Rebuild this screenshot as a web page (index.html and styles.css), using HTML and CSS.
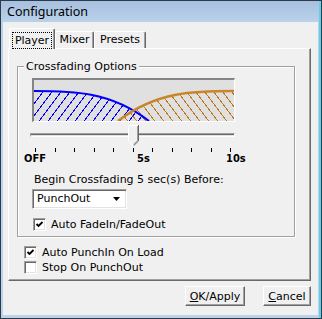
FILE: index.html
```html
<!DOCTYPE html>
<html lang="en">
<head>
  <meta charset="UTF-8" />
  <title>Configuration</title>
  <link rel="stylesheet" href="styles.css">
</head>
<body>
  <div class="window">
    <div class="titlebar">Configuration</div>
    <div class="client">
      <div class="tabs">
        <div class="tab selected"><span class="focus">Player</span></div>
        <div class="tab">Mixer</div>
        <div class="tab">Presets</div>
      </div>

      <div class="panel">
        <div class="group">
          <div class="group-title">Crossfading Options</div>

          <!-- fade curves -->
          <div class="graph">
            <svg width="200" height="41" viewBox="0 0 200 41">
              <defs>
                <pattern id="hatch-blue" width="9" height="12" patternUnits="userSpaceOnUse">
                  <line x1="0" y1="12" x2="9" y2="0" stroke="#0000ff" stroke-width="1" shape-rendering="crispEdges" />
                </pattern>
                <pattern id="hatch-orange" width="9" height="12" patternUnits="userSpaceOnUse">
                  <line x1="0" y1="0" x2="9" y2="12" stroke="#c07a1e" stroke-width="1" shape-rendering="crispEdges" />
                </pattern>
              </defs>
              <path d="M-1 11 C 37.7 11 76.3 11 115 41 L -1 41 Z" fill="url(#hatch-blue)" />
              <path d="M200 11 C 161.3 11 122.7 11 84 41 L 200 41 Z" fill="url(#hatch-orange)" />
              <path d="M-1 11 C 37.7 11 76.3 11 115 41" fill="none" stroke="#0000ff" stroke-width="2.2" />
              <path d="M200 11 C 161.3 11 122.7 11 84 41" fill="none" stroke="#c8862a" stroke-width="2.5" />
            </svg>
          </div>

          <div class="slider">
            <div class="groove"></div>
            <svg class="thumb" width="11" height="21" viewBox="0 0 11 21">
              <polygon points="0,0 11,0 11,16 5.5,21 0,16" fill="#f0f0f0" />
              <polyline points="0.5,16 0.5,0.5 10,0.5" fill="none" stroke="#fff" />
              <polyline points="10.5,0 10.5,16 5.5,20.8" fill="none" stroke="#696969" />
              <polyline points="9.5,1 9.5,15.6 5.5,19.5" fill="none" stroke="#a0a0a0" />
              <polyline points="0.5,16 5.5,20.8" fill="none" stroke="#fff" />
            </svg>
          </div>

          <div class="ticks">
            <i></i><i></i><i></i><i></i><i></i><i></i><i></i><i></i><i></i><i></i><i></i>
          </div>
          <div class="scale">
            <span class="off">OFF</span><span class="mid">5s</span><span>10s</span>
          </div>

          <div class="caption">Begin Crossfading 5 sec(s) Before:</div>

          <div class="combo">
            <span class="combo-text">PunchOut</span>
            <span class="combo-btn">
              <svg width="7" height="4" viewBox="0 0 7 4"><polygon points="0,0 7,0 3.5,4" fill="#000" /></svg>
            </span>
          </div>

          <label class="check inner">
            <span class="box checked">
              <svg width="9" height="9" viewBox="0 0 9 9"><polyline points="1.5,4 3.5,6 7.5,2" fill="none" stroke="#000" stroke-width="1.8" /></svg>
            </span>
            Auto FadeIn/FadeOut
          </label>
        </div>

        <div class="options">
          <label class="check">
            <span class="box checked">
              <svg width="9" height="9" viewBox="0 0 9 9"><polyline points="1.5,4 3.5,6 7.5,2" fill="none" stroke="#000" stroke-width="1.8" /></svg>
            </span>
            Auto PunchIn On Load
          </label>
          <label class="check">
            <span class="box"></span>
            Stop On PunchOut
          </label>
        </div>
      </div>

      <div class="buttons">
        <button class="btn ok"><u>O</u>K/Apply</button>
        <button class="btn cancel"><u>C</u>ancel</button>
      </div>
    </div>
  </div>
</body>
</html>
```

FILE: styles.css
```css
* { box-sizing: border-box; }
body {
  margin: 0;
  font-family: "DejaVu Sans", sans-serif;
  font-size: 11px;
  color: #000;
  background: #3a8a5a;
}
.window {
  width: 322px;
  height: 319px;
  border: 1px solid #2b3a4c;
  background: linear-gradient(#a6c0de, #bad1ea 21px, #bcd3ec);
  box-shadow: inset -2px 0 0 #5fd0e8;
  padding: 0 3px 3px 2px;
  display: flex;
  flex-direction: column;
}
.titlebar {
  height: 21px;
  line-height: 22px;
  padding-left: 4px;
  font-family: "Noto Sans", sans-serif;
  font-size: 12.5px;
}
.client {
  flex: 1;
  background: #f0f0f0;
  padding: 6px 0 0 5px;
}

/* tabs */
.tabs {
  display: flex;
  align-items: flex-end;
  height: 20px;
  padding-left: 1px;
}
.tab {
  height: 17px;
  line-height: 15px;
  text-align: center;
  border-top: 1px solid #fff;
  border-left: 1px solid #fff;
  border-right: 1px solid #696969;
  box-shadow: inset -1px 0 0 #a0a0a0;
  border-radius: 2px 2px 0 0;
}
.tab:nth-child(2) { width: 39px; }
.tab:nth-child(3) { width: 52px; }
.tab.selected {
  width: 46px;
  height: 21px;
  margin-bottom: -1px;
  position: relative;
  z-index: 1;
  background: #f0f0f0;
  padding: 3px 2px 0 2px;
}
.focus {
  display: block;
  height: 17px;
  line-height: 15px;
  border: 1px dotted #000;
}

.panel {
  width: 303px;
  height: 233px;
  border-top: 1px solid #fff;
  border-left: 1px solid #fff;
  border-right: 1px solid #696969;
  border-bottom: 1px solid #696969;
  box-shadow: inset -1px -1px 0 #a0a0a0;
  padding: 17px 0 0 8px;
}

/* group box */
.group {
  width: 278px;
  border: 1px solid #a0a0a0;
  box-shadow: inset 1px 1px 0 #fff, 1px 1px 0 #fff;
  padding: 0 0 5px 14px;
}
.group-title {
  display: table;
  margin: -7px 0 0 -8px;
  padding: 0 2px;
  line-height: 13px;
  background: #f0f0f0;
}
.graph {
  width: 203px;
  height: 44px;
  margin-top: 5px;
  background: #e0e0e0;
  border-top: 2px solid #858585;
  border-left: 2px solid #858585;
  border-right: 1px solid #fff;
  border-bottom: 1px solid #fff;
}
.graph svg { display: block; }

.slider {
  display: grid;
  width: 205px;
  height: 21px;
  margin: 3px 0 0 -2px;
}
.slider > * { grid-area: 1 / 1; }
.groove {
  align-self: start;
  margin-top: 8px;
  height: 4px;
  background: #e3e3e3;
  border-top: 1px solid #a0a0a0;
  border-left: 1px solid #a0a0a0;
  border-bottom: 1px solid #fff;
  border-right: 1px solid #fff;
  box-shadow: inset 0 1px 0 #696969;
}
.thumb {
  display: block;
  margin-left: 98px;
}
.ticks {
  display: flex;
  justify-content: space-between;
  width: 196px;
  height: 4px;
  margin: 2px 0 0 3px;
}
.ticks i {
  width: 1px;
  background: #000;
}
.scale {
  display: flex;
  margin-left: -8px;
  line-height: 13px;
  font-family: "DejaVu Sans Condensed", "DejaVu Sans", sans-serif;
  font-weight: bold;
}
.scale .off { width: 113px; }
.scale .mid { width: 89px; }

.caption {
  margin: 8px 0 0 2px;
  line-height: 13px;
}

.combo {
  display: flex;
  width: 95px;
  height: 20px;
  margin-top: 3px;
  background: #fff;
  border-top: 1px solid #a0a0a0;
  border-left: 1px solid #a0a0a0;
  border-right: 1px solid #fff;
  border-bottom: 1px solid #fff;
  box-shadow: inset 1px 1px 0 #696969, inset -1px -1px 0 #e3e3e3;
  padding: 2px;
}
.combo-text {
  flex: 1;
  line-height: 14px;
  padding-left: 2px;
}
.combo-btn {
  width: 15px;
  display: flex;
  align-items: center;
  justify-content: center;
}
.combo-btn svg { display: block; }

/* checkboxes */
.check {
  display: flex;
  align-items: center;
  gap: 5px;
  height: 13px;
  line-height: 13px;
}
.check.inner {
  margin: 9px 0 0 1px;
}
.box {
  width: 13px;
  height: 13px;
  background: #fff;
  border-top: 1px solid #a0a0a0;
  border-left: 1px solid #a0a0a0;
  border-right: 1px solid #fff;
  border-bottom: 1px solid #fff;
  box-shadow: inset 1px 1px 0 #696969, inset -1px -1px 0 #e3e3e3;
  display: flex;
  align-items: center;
  justify-content: center;
}
.box svg { display: block; }
.options {
  display: flex;
  flex-direction: column;
  gap: 2px;
  margin: 9px 0 0 7px;
}

/* dialog buttons */
.buttons {
  display: flex;
  justify-content: flex-end;
  gap: 18px;
  width: 303px;
  margin-top: 5px;
}
.btn {
  height: 20px;
  padding: 0;
  font: inherit;
  color: #000;
  background: #f0f0f0;
  border-top: 1px solid #fff;
  border-left: 1px solid #fff;
  border-right: 1px solid #696969;
  border-bottom: 1px solid #696969;
  box-shadow: inset -1px -1px 0 #a0a0a0;
}
.btn.ok { width: 60px; }
.btn.cancel { width: 48px; }
```
